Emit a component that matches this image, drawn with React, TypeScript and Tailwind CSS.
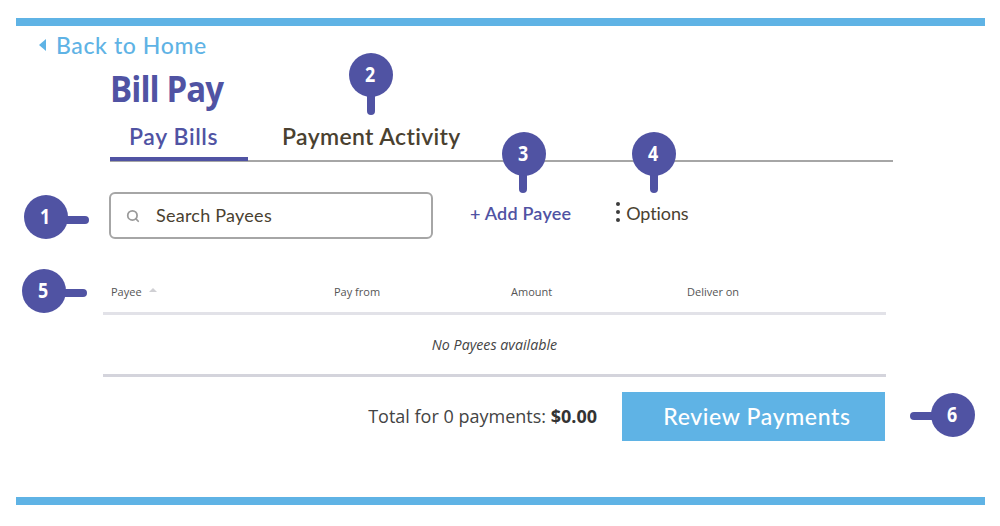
import React from 'react';
import { Search } from 'lucide-react';

const proxima = "font-['Lato','Liberation_Sans',sans-serif]";
const openSans = "font-['Open_Sans','Liberation_Sans',sans-serif]";

const Pin: React.FC<{ n: number; className: string; stem: string }> = ({ n, className, stem }) => (
  <div className={`absolute w-11 h-11 ${className}`}>
    <div className={`absolute bg-[#5053a3] rounded-full ${stem}`} />
    <div className="absolute inset-0 rounded-full bg-[#5053a3] flex items-center justify-center text-white text-[21px] font-bold font-['Open_Sans',sans-serif] pr-[2px]">
      <span className="scale-x-[0.85]">{n}</span>
    </div>
  </div>
);

export default function App() {
  return (
    <div className={`relative w-[1000px] h-[526px] bg-white overflow-hidden pt-[18px] px-4 ${proxima}`}>
      <div className="h-2 w-[969px] bg-[#5fb3e5]" />

      <div className="flex items-center ml-[23px] mt-[4px] h-[30px] text-[#5fb3e5] text-[23px] leading-[30px] font-medium tracking-[0.6px]">
        <span className="w-0 h-0 border-y-[6.5px] border-y-transparent border-r-[7px] border-r-[#5fb3e5] mr-[10px]" />
        Back to Home
      </div>

      <h1 className="ml-[94px] mt-[9px] h-[40px] text-[#5053a3] text-[36px] leading-[40px] font-bold font-['Open_Sans',sans-serif] tracking-[-1px] origin-left scale-x-[0.917]">
        Bill Pay
      </h1>

      <div className="ml-[94px] mt-[7px] w-[783px] h-[46px] flex border-b-2 border-[#a6a6a6] text-[23px]">
        <div className="w-[138px] h-[45px] border-b-4 border-[#5053a3] text-[#5053a3] pl-[19px] leading-[40px] font-semibold tracking-[0.6px]">
          Pay Bills
        </div>
        <div className="ml-[34px] text-[#4a4130] leading-[40px] font-semibold tracking-[0.35px]">Payment Activity</div>
      </div>

      <div className="flex items-center ml-[93px] mt-[30px] h-[47px]">
        <div className="w-[324px] h-[47px] border-2 border-[#a6a6a6] rounded-md flex items-center pl-[15px]">
          <Search className="w-[14px] h-[14px] text-[#9a9a9a]" strokeWidth={3} />
          <span className="ml-[16px] text-[#4a4130] text-[18px] tracking-[0.25px]">Search Payees</span>
        </div>
        <div className="ml-[37px] -mt-[5px] text-[#5053a3] text-[18px] font-semibold tracking-[0.2px]">+ Add Payee</div>
        <div className="ml-[45px] -mt-[5px] flex items-center text-[#4a4130] text-[18px] tracking-[-0.1px]">
          <span className="flex flex-col gap-[4px] mr-[6px] -mt-[2px]">
            <span className="w-1 h-1 rounded-full bg-[#3d3d3d]" />
            <span className="w-1 h-1 rounded-full bg-[#3d3d3d]" />
            <span className="w-1 h-1 rounded-full bg-[#3d3d3d]" />
          </span>
          Options
        </div>
      </div>

      <div className={`ml-[87px] mt-[30px] w-[783px] ${openSans}`}>
        <div className="h-[46px] flex items-center border-b-[3px] border-[#e2e2e8] text-[11px] text-[#555] pt-[3px]">
          <div className="w-[231px] pl-[8px] flex items-center">
            Payee
            <span className="ml-[7px] -mt-[4px] w-0 h-0 border-x-[4px] border-x-transparent border-b-[4px] border-b-[#d0d0d4]" />
          </div>
          <div className="w-[177px]">Pay from</div>
          <div className="w-[176px]">Amount</div>
          <div>Deliver on</div>
        </div>
        <div className="h-[62px] flex items-center justify-center border-b-[3px] border-[#d4d4dc] text-[14.25px] italic text-[#444]">
          No Payees available
        </div>
      </div>

      <div className="flex items-center justify-end w-[869px] mt-[15px]">
        <div className={`text-[#444] text-[18px] mr-[25px] ${openSans}`}>
          Total for 0 payments: <b className="text-[#333]">$0.00</b>
        </div>
        <div className="w-[263px] h-[49px] bg-[#5fb3e5] text-white text-[23px] font-medium tracking-[0.65px] pl-[7px] flex items-center justify-center">
          Review Payments
        </div>
      </div>

      <div className="h-2 w-[969px] bg-[#5fb3e5] mt-[56px]" />

      <Pin n={1} className="left-[24px] top-[195px]" stem="left-[38px] top-[21px] w-[27px] h-2" />
      <Pin n={2} className="left-[349px] top-[53px]" stem="left-[18px] top-[38px] w-2 h-[24px]" />
      <Pin n={3} className="left-[502px] top-[132px]" stem="left-[17px] top-[38px] w-2 h-[23px]" />
      <Pin n={4} className="left-[632px] top-[132px]" stem="left-[18px] top-[38px] w-2 h-[23px]" />
      <Pin n={5} className="left-[22px] top-[269px]" stem="left-[38px] top-[20px] w-[27px] h-2" />
      <Pin n={6} className="left-[931px] top-[393px]" stem="-left-[21px] top-[19px] w-[27px] h-2" />
    </div>
  );
}
